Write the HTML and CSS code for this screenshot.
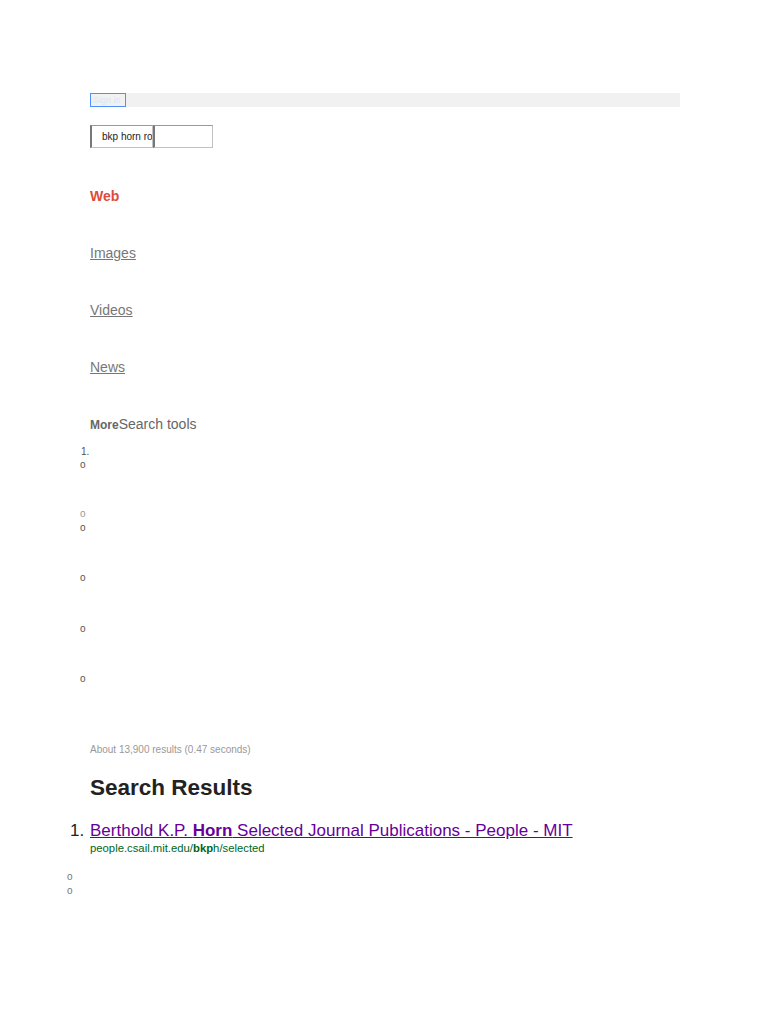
FILE: index.html
```html
<!DOCTYPE html>
<html lang="en">
<head>
  <meta charset="UTF-8">
  <title>bkp horn - Search</title>
  <link rel="stylesheet" href="styles.css">
</head>
<body>

  <div class="topbar">
    <span class="signin">Sign in</span>
  </div>

  <form class="searchform">
    <input class="q" type="text" value="bkp horn rotation">
    <input class="go" type="text" value="">
  </form>

  <ul class="nav">
    <li class="active">Web</li>
    <li><a href="#">Images</a></li>
    <li><a href="#">Videos</a></li>
    <li><a href="#">News</a></li>
    <li class="more"><b>More</b>Search tools</li>
  </ul>

  <div class="num small">1.</div>
  <div class="bullets">
    <div class="b b1">o</div>
    <div class="b b2">o</div>
    <div class="b b3">o</div>
    <div class="b b4">o</div>
    <div class="b b5">o</div>
    <div class="b b6">o</div>
  </div>

  <div class="stats">About 13,900 results (0.47 seconds)</div>

  <h2>Search Results</h2>

  <div class="result">
    <span class="rnum">1.</span>
    <div class="rbody">
      <a class="rtitle" href="#">Berthold K.P. <b>Horn</b> Selected Journal Publications - People - MIT</a>
      <div class="rurl">people.csail.mit.edu/<b>bkp</b>h/selected</div>
    </div>
  </div>

  <div class="tail">
    <div>o</div>
    <div>o</div>
  </div>

</body>
</html>
```

FILE: styles.css
```css
body {
  font-family: "Liberation Sans", Arial, sans-serif;
  margin: 0;
  padding: 93px 0 0 0;
  color: #222;
  background: #fff;
}

.topbar {
  margin-left: 90px;
  width: 590px;
  height: 14px;
  background: #f1f1f1;
}

.signin {
  display: inline-block;
  box-sizing: border-box;
  width: 36px;
  height: 14px;
  border: 1px solid #4d90fe;
  color: #dbe6f5;
  font-size: 9px;
  line-height: 12px;
  overflow: hidden;
  padding-left: 2px;
}

.searchform {
  margin: 18px 0 0 90px;
  display: flex;
  height: 23px;
}

.q, .go {
  box-sizing: border-box;
  height: 23px;
  border: 1px solid #c0c0c0;
  border-top-color: #999;
  border-left: 2px solid #777;
  font-family: "Liberation Sans", Arial, sans-serif;
  font-size: 10px;
  color: #222;
  padding: 0 0 0 10px;
  margin: 0;
  outline: none;
  background: #fff;
}

.q { width: 63px; }
.go { width: 60px; padding: 0; }

.nav {
  list-style: none;
  margin: 40px 0 0 90px;
  padding: 0;
  font-size: 14px;
}

.nav li {
  height: 57px;
  line-height: 16px;
  color: #777;
}

.nav a {
  color: #777;
  text-decoration: underline;
}

.nav .active {
  color: #dd4b39;
  font-weight: bold;
}

.nav .more {
  height: 20px;
  color: #666;
}

.nav .more b {
  font-size: 12px;
  color: #666;
}

.small {
  font-size: 10px;
  color: #555;
}

.num {
  margin: 10px 0 0 81px;
  line-height: 12px;
}

.bullets {
  position: relative;
  height: 286px;
}

.b {
  position: absolute;
  left: 80px;
  font-size: 10px;
  line-height: 12px;
  color: #555;
}

.b1 { top: 1px; }
.b2 { top: 50px; color: #999; }
.b3 { top: 64px; }
.b4 { top: 114px; }
.b5 { top: 165px; }
.b6 { top: 215px; }

.stats {
  margin-left: 90px;
  font-size: 10px;
  line-height: 12px;
  color: #999;
}

h2 {
  margin: 18px 0 0 90px;
  font-size: 22.5px;
  line-height: 28px;
  color: #222;
}

.result {
  display: flex;
  margin: 18px 0 0 70px;
  font-size: 17px;
}

.rnum {
  width: 20px;
  line-height: 22px;
  color: #222;
}

.rtitle {
  color: #660099;
  line-height: 22px;
  text-decoration: underline;
}

.rurl {
  font-size: 11.3px;
  line-height: 12px;
  color: #006621;
}

.tail {
  margin: 16px 0 0 67px;
  font-size: 10px;
  line-height: 14px;
  color: #777;
}
```
